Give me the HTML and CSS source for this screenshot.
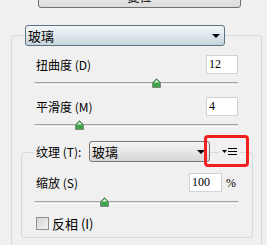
FILE: index.html
```html
<!DOCTYPE html>
<html lang="zh-CN">
<head>
    <meta charset="UTF-8">
    <title>玻璃</title>
    <link rel="stylesheet" href="styles.css">
</head>
<body>

    <div class="reset-btn">复位</div>

    <div class="group">
        <div class="select select-blue"><span>玻璃</span><i class="arrow"></i></div>

        <div class="row">
            <label>扭曲度 (D)</label>
            <input class="num" type="text" value="12">
        </div>
        <div class="slider">
            <svg class="thumb" style="left:118px" width="9" height="10" viewBox="0 0 9 10"><path d="M4.5 0.5 L8.5 4.5 L8.5 9.5 L0.5 9.5 L0.5 4.5 Z" fill="#3ca447" stroke="#7d8a80"/><path d="M4.5 2 L7 4.5 L2 4.5 Z" fill="#e8f5e8"/></svg>
        </div>

        <div class="row">
            <label>平滑度 (M)</label>
            <input class="num" type="text" value="4">
        </div>
        <div class="slider">
            <svg class="thumb" style="left:41px" width="9" height="10" viewBox="0 0 9 10"><path d="M4.5 0.5 L8.5 4.5 L8.5 9.5 L0.5 9.5 L0.5 4.5 Z" fill="#3ca447" stroke="#7d8a80"/><path d="M4.5 2 L7 4.5 L2 4.5 Z" fill="#e8f5e8"/></svg>
        </div>

        <div class="subgroup">
            <div class="sub-head">
                <span class="sub-label">纹理 (T):</span>
                <div class="select select-grey"><span>玻璃</span><i class="arrow"></i></div>
                <span class="menu-icon">
                    <svg width="15" height="7" viewBox="0 0 15 7"><path d="M0 2 L5 2 L2.5 5 Z" fill="#000"/><rect x="6" y="0" width="9" height="1" fill="#000"/><rect x="6" y="3" width="9" height="1" fill="#000"/><rect x="6" y="6" width="9" height="1" fill="#000"/></svg>
                </span>
                <div class="highlight"></div>
            </div>

            <div class="row row-scale">
                <label>缩放 (S)</label>
                <input class="num num-wide" type="text" value="100">
                <span class="pct">%</span>
            </div>
            <div class="slider slider-inner">
                <svg class="thumb" style="left:66px" width="9" height="10" viewBox="0 0 9 10"><path d="M4.5 0.5 L8.5 4.5 L8.5 9.5 L0.5 9.5 L0.5 4.5 Z" fill="#3ca447" stroke="#7d8a80"/><path d="M4.5 2 L7 4.5 L2 4.5 Z" fill="#e8f5e8"/></svg>
            </div>

            <div class="check-row">
                <span class="checkbox"></span>
                <span>反相 (I)</span>
            </div>
        </div>
    </div>

</body>
</html>
```

FILE: styles.css
```css
html, body {
    margin: 0;
    height: 245px;
    overflow: hidden;
}
body {
    background-color: #f0f0f0;
    color: #000;
    font-family: "Noto Sans CJK SC", "Liberation Sans", sans-serif;
    font-size: 12px;
    line-height: 14px;
}
.reset-btn {
    box-sizing: border-box;
    width: 203px;
    height: 22px;
    margin: -14px 0 0 38px;
    border: 1px solid #707070;
    border-radius: 3px;
    background: linear-gradient(#f2f2f2, #dcdcdc);
    text-align: center;
    line-height: 20px;
}
.group {
    box-sizing: border-box;
    width: 251px;
    margin: 27px 0 0 11px;
    padding: 0 8px 14px 9px;
    border: 1px solid #d5dadd;
    border-radius: 3px;
}
.select {
    box-sizing: border-box;
    height: 21px;
    display: flex;
    align-items: center;
    justify-content: space-between;
    padding: 0 4px 0 2px;
    border-radius: 3px;
}
.select-blue {
    width: 200px;
    margin: -11px 0 0 4px;
    border: 1px solid #5b7282;
    background: linear-gradient(#f3f6f8, #dde6eb 50%, #c7d5dd);
    font-size: 13px;
}
.select-grey {
    width: 121px;
    border: 1px solid #777;
    background: linear-gradient(#f5f5f5, #e6e6e6 50%, #d6d6d6);
    font-size: 13px;
}
.arrow {
    width: 0;
    height: 0;
    border-left: 4px solid transparent;
    border-right: 4px solid transparent;
    border-top: 4px solid #000;
}
.row {
    display: flex;
    align-items: center;
    justify-content: space-between;
    height: 19px;
    margin: 9px 15px 0 15px;
}
.num {
    box-sizing: border-box;
    width: 32px;
    height: 19px;
    padding: 0 0 0 2px;
    border: 1px solid #cfd3d7;
    background: #fff;
    font-family: "Liberation Serif", serif;
    font-size: 12px;
    color: #000;
    outline: none;
}
.num-wide {
    width: 33px;
}
.slider {
    position: relative;
    height: 10px;
    margin: 4px 15px 0 13px;
}
.slider::before {
    content: "";
    position: absolute;
    left: 0;
    right: 0;
    top: 4px;
    height: 1px;
    border-top: 1px solid #a3a3a3;
    border-bottom: 1px solid #ffffff;
    background: #e4e4e4;
    border-radius: 2px 0 0 2px;
}
.thumb {
    position: absolute;
    top: 0;
}
.subgroup {
    margin: 22px 0 0 0;
    padding: 0 0 7px 0;
    border: 1px solid #d5dadd;
    border-radius: 3px;
}
.sub-head {
    position: relative;
    display: flex;
    align-items: center;
    height: 21px;
    margin: -12px 0 0 0;
}
.sub-label {
    box-sizing: border-box;
    width: 55px;
    margin-left: 12px;
    padding: 0 2px;
    background: #f0f0f0;
}
.menu-icon {
    display: flex;
    margin-left: 9px;
    padding: 0 3px;
    background: #f0f0f0;
}
.highlight {
    position: absolute;
    left: 182px;
    top: -6px;
    width: 45px;
    height: 32px;
    box-sizing: border-box;
    border: 3px solid #f21f1f;
    border-radius: 4px;
}
.row-scale {
    justify-content: flex-start;
    margin: 11px 14px 0 14px;
}
.row-scale label {
    flex: 1;
}
.pct {
    width: 12px;
    margin-left: 4px;
    font-family: "Liberation Serif", serif;
}
.slider-inner {
    margin: 5px 14px 0 12px;
}
.check-row {
    display: flex;
    align-items: center;
    gap: 3px;
    margin: 10px 0 0 14px;
    height: 13px;
    font-size: 13px;
}
.checkbox {
    box-sizing: border-box;
    width: 13px;
    height: 13px;
    border: 1px solid #8f8f8f;
    background: linear-gradient(135deg, #d4d4d4, #f4f4f4);
}
```
